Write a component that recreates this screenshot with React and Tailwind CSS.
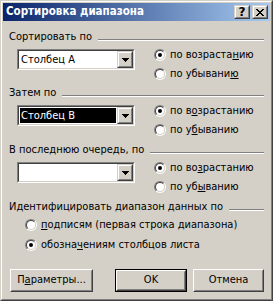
import React from "react";

function Radio({ checked, children }) {
  return (
    <div className="flex items-center h-[16px]">
      <span className="w-[12px] h-[12px] rounded-full border border-t-[#808080] border-l-[#808080] border-r-white border-b-white flex">
        <span className="flex-1 rounded-full border border-t-[#404040] border-l-[#404040] border-r-[#d4d0c8] border-b-[#d4d0c8] bg-white flex items-center justify-center">
          {checked && <span className="w-[4px] h-[4px] rounded-full bg-black" />}
        </span>
      </span>
      <span className="ml-[4px] whitespace-nowrap">{children}</span>
    </div>
  );
}

function GroupHeader({ children }) {
  return (
    <div className="flex h-[12px] leading-[12px]">
      <span className="whitespace-nowrap">{children}</span>
      <div className="flex-1 self-start ml-[6px] mt-[8px] h-[2px] border-t border-b border-t-[#808080] border-b-white" />
    </div>
  );
}

function Combo({ value, selected }) {
  return (
    <div className="w-[118px] h-[21px] border border-t-[#808080] border-l-[#808080] border-r-white border-b-white flex">
      <div className="flex-1 border border-t-[#404040] border-l-[#404040] border-r-[#d4d0c8] border-b-[#d4d0c8] bg-white flex">
        <div className="flex-1 flex p-[1px]">
          {value && (
            <div
              className={
                selected
                  ? "flex-1 bg-black text-white pl-[1px] leading-[15px]"
                  : "flex-1 pl-[1px] leading-[15px]"
              }
            >
              {value}
            </div>
          )}
        </div>
        <div className="w-[16px] border border-t-[#d4d0c8] border-l-[#d4d0c8] border-r-[#404040] border-b-[#404040] flex">
          <div className="flex-1 border border-t-white border-l-white border-r-[#808080] border-b-[#808080] bg-[#d4d0c8] flex items-center justify-center">
            <svg width="7" height="4" viewBox="0 0 7 4" shapeRendering="crispEdges">
              <path d="M0 0h7v1H0zM1 1h5v1H1zM2 2h3v1H2zM3 3h1v1H3z" fill="#000" />
            </svg>
          </div>
        </div>
      </div>
    </div>
  );
}

function Section({ title, value, selected, up, down, last }) {
  return (
    <div className={last ? "flex flex-col mb-[6px]" : "flex flex-col mb-[5px]"}>
      <GroupHeader>{title}</GroupHeader>
      <div className="flex">
        <div className="ml-[8px] mt-[6px]">
          <Combo value={value} selected={selected} />
        </div>
        <div className="ml-[19px] mt-[4px] flex flex-col gap-[3px]">
          <Radio checked>{up}</Radio>
          <Radio>{down}</Radio>
        </div>
      </div>
    </div>
  );
}

function Button({ className, isDefault, children }) {
  return (
    <div className={`${className} h-[23px] flex ${isDefault ? "border border-black" : ""}`}>
      <div className="flex-1 border border-t-white border-l-white border-r-[#404040] border-b-[#404040] flex">
        <div className="flex-1 border border-t-[#d4d0c8] border-l-[#d4d0c8] border-r-[#808080] border-b-[#808080] flex items-center justify-center">
          {children}
        </div>
      </div>
    </div>
  );
}

function CaptionButton({ children }) {
  return (
    <div className="w-[16px] h-[14px] border border-t-[#d4d0c8] border-l-[#d4d0c8] border-r-[#404040] border-b-[#404040] flex">
      <div className="flex-1 border border-t-white border-l-white border-r-[#808080] border-b-[#808080] bg-[#d4d0c8] flex items-center justify-center">
        {children}
      </div>
    </div>
  );
}

export default function App() {
  return (
    <div className="w-[273px] h-[301px] font-['DejaVu_Sans_Condensed','DejaVu_Sans',sans-serif] text-[11px] text-black border border-t-[#d4d0c8] border-l-[#d4d0c8] border-r-[#404040] border-b-[#404040]">
      <div className="h-full border border-t-white border-l-white border-r-[#808080] border-b-[#808080] bg-[#d4d0c8] p-[1px] flex flex-col">
        {/* Title bar */}
        <div className="h-[18px] flex items-center pl-[3px] pr-[2px] bg-[linear-gradient(to_right,#0a246a,#a6caf0)]">
          <span className="flex-1 text-white font-bold text-[11.5px] whitespace-nowrap">Сортировка диапазона</span>
          <div className="flex gap-[2px]">
            <CaptionButton>
              <span className="font-bold text-[12px] leading-[12px] font-['DejaVu_Sans',sans-serif]">?</span>
            </CaptionButton>
            <CaptionButton>
              <svg width="8" height="7" viewBox="0 0 8 7" shapeRendering="crispEdges">
                <path
                  d="M0 0h2v1H0zM6 0h2v1H6zM1 1h2v1H1zM5 1h2v1H5zM2 2h4v1H2zM3 3h2v1H3zM2 4h4v1H2zM1 5h2v1H1zM5 5h2v1H5zM0 6h2v1H0zM6 6h2v1H6z"
                  fill="#000"
                />
              </svg>
            </CaptionButton>
          </div>
        </div>

        {/* Body */}
        <div className="flex flex-col pl-[6px] pr-[6px] pt-[10px]">
          <Section
            title="Сортировать по"
            value="Столбец A"
            up={<>по возраста<u>н</u>ию</>}
            down={<>по убывани<u>ю</u></>}
          />
          <Section
            title="Затем по"
            value="Столбец B"
            selected
            up={<>по в<u>о</u>зрастанию</>}
            down={<>по у<u>б</u>ыванию</>}
            last
          />
          <Section
            title="В последнюю очередь, по"
            up={<>по во<u>з</u>растанию</>}
            down={<>по уб<u>ы</u>ванию</>}
            last
          />

          <GroupHeader>Идентифицировать диапазон данных по</GroupHeader>
          <div className="ml-[16px] mt-[4px] flex flex-col gap-[4px]">
            <Radio><u>п</u>одписям (первая строка диапазона)</Radio>
            <Radio checked>обозна<u>ч</u>ениям столбцов листа</Radio>
          </div>

          {/* Buttons */}
          <div className="flex mt-[16px] ml-[1px]">
            <Button className="w-[83px]">П<u>а</u>раметры...</Button>
            <Button className="w-[72px] ml-[22px]" isDefault>OK</Button>
            <Button className="w-[71px] ml-[6px]">Отмена</Button>
          </div>
        </div>
      </div>
    </div>
  );
}
